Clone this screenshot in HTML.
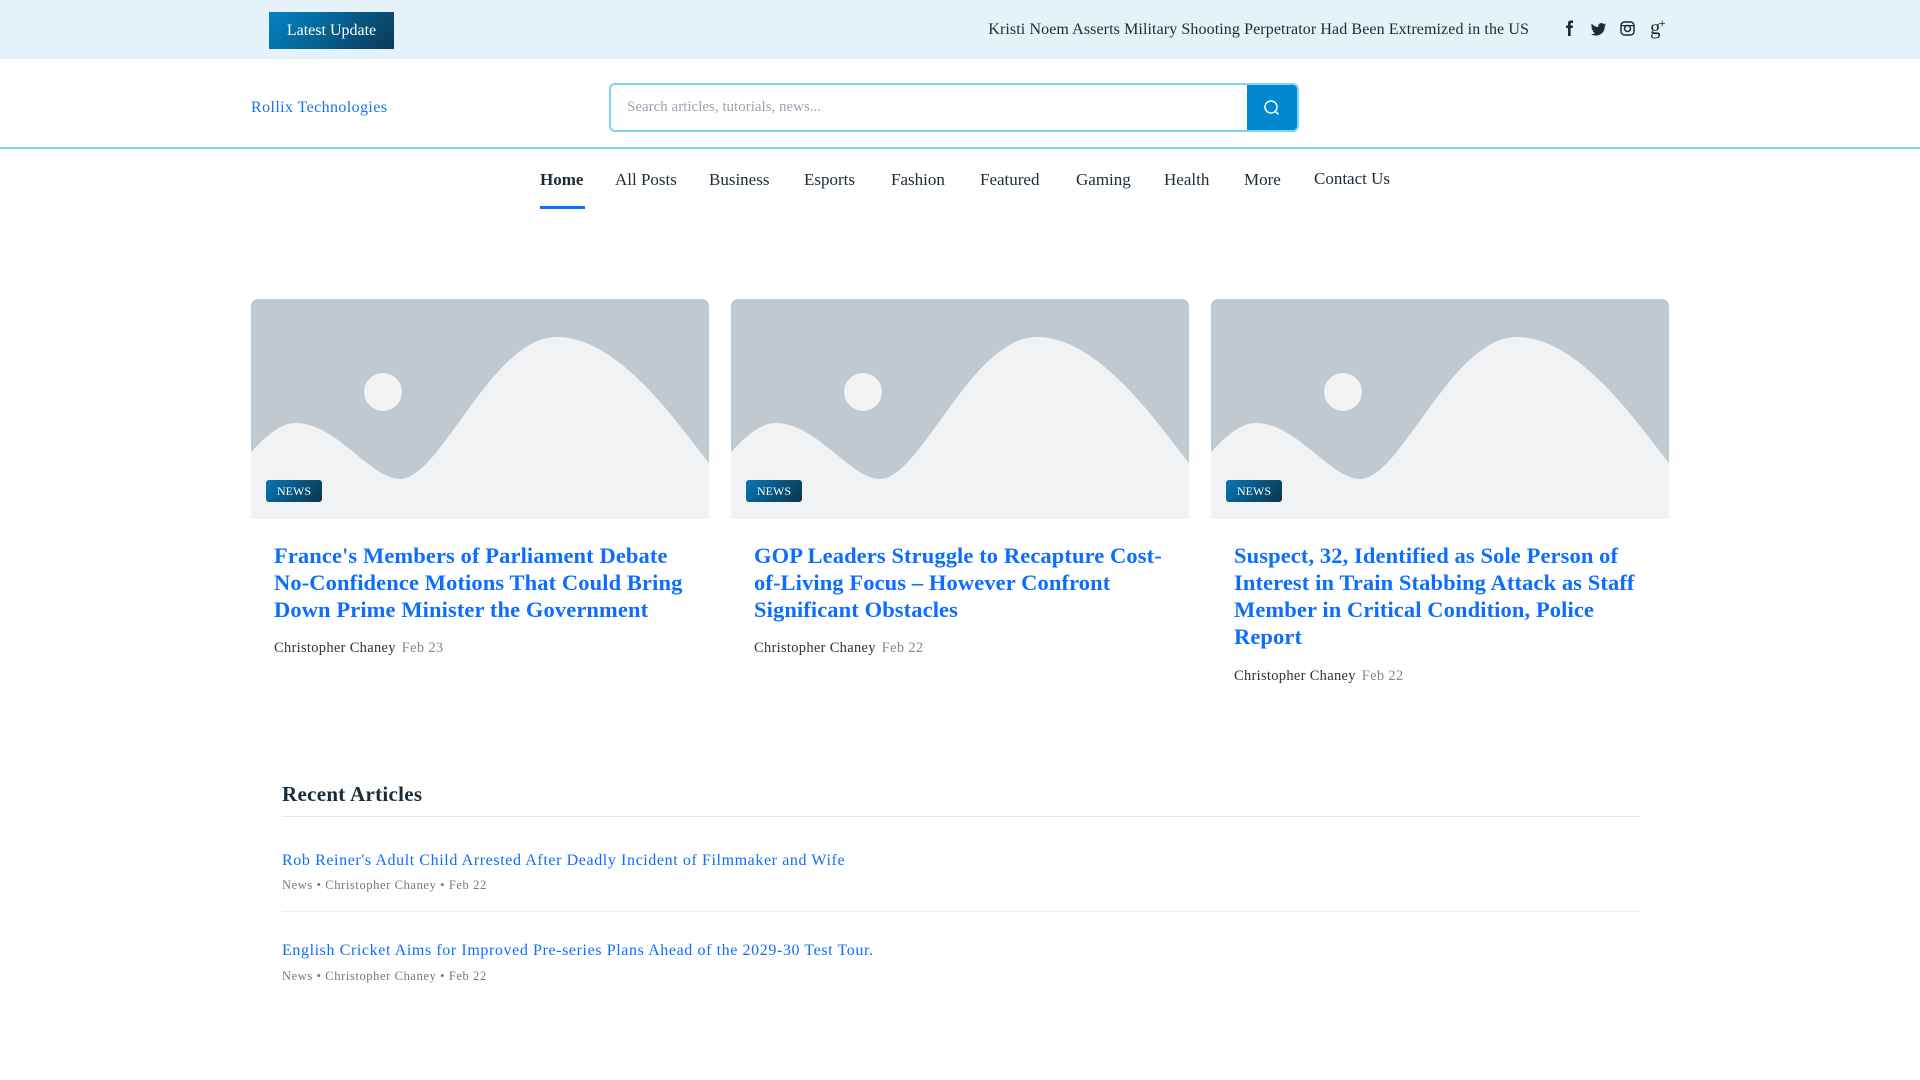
<!DOCTYPE html>
<html><head><meta charset="utf-8"><style>
*{margin:0;padding:0;box-sizing:border-box}
body{width:1920px;height:1080px;background:#fff;font-family:"Liberation Serif",serif;position:relative;overflow:hidden;color:#1c2b39}
.a{position:absolute;white-space:nowrap}
.top{position:absolute;left:0;top:0;width:1920px;height:59px;background:#e5f2f9}
.btn{left:269px;top:12px;width:125px;height:37px;background:linear-gradient(135deg,#0284c7,#0b3a55);color:#fff;font-size:16px;line-height:37px;text-align:center}
.nav{top:170px;font-size:17px;color:#1c2b39}
.card{position:absolute;top:299px;width:458px;height:220px;border-radius:7px 7px 0 0;overflow:hidden}
.badge{position:absolute;left:15px;top:181px;width:56px;height:22px;border-radius:3px;background:linear-gradient(135deg,#0677b3,#0c3650);color:#fff;font-size:12px;line-height:22px;text-align:center}
.t{position:absolute;font-weight:bold;font-size:22.5px;line-height:27px;color:#0d6efd;white-space:normal;letter-spacing:0.1px}
.au{font-size:14.5px;color:#333;letter-spacing:0.3px}
.au span{color:#888;margin-left:6px}
.rt{font-size:16px;color:#0d6efd;letter-spacing:0.6px}
.rm{font-size:12.5px;color:#777;letter-spacing:0.6px}
</style></head><body>
<div class="top"></div>
<div class="a btn">Latest Update</div>
<div class="a" style="right:391px;top:21px;font-size:16px;color:#1c2b39;letter-spacing:0.1px">Kristi Noem Asserts Military Shooting Perpetrator Had Been Extremized in the US</div>
<svg class="a" style="left:1560px;top:17px" width="110" height="22" viewBox="0 0 110 22" fill="#1c2b39">
<path d="M8 19V11H6V8.5h2V6.5C8 4.5 9 3.5 11 3.5h2V6h-1.3C10.9 6 10.7 6.4 10.7 7v1.5h2.4L12.8 11h-2.1v8z"/>
<path d="M46 7.5c-.6.3-1.2.4-1.8.5.7-.4 1.1-1 1.4-1.7-.6.4-1.3.6-2 .8A3.1 3.1 0 0 0 38.3 10c-2.6-.1-4.9-1.4-6.5-3.300-.9 1.5-.4 3.300 1 4.200-.5 0-1-.2-1.400-.4 0 1.500 1.100 2.800 2.500 3.100-.5.1-1 .2-1.400.1.4 1.300 1.600 2.100 2.900 2.200A6.300 6.300 0 0 1 31 17.200c1.400.9 3.100 1.400 4.800 1.400 5.800 0 9-4.800 9-9v-.4c.5-.5 1-1 1.300-1.700z"/>
<rect x="61" y="5" width="13" height="13" rx="3.5" fill="none" stroke="#1c2b39" stroke-width="1.5"/><circle cx="67.5" cy="11.5" r="3" fill="none" stroke="#1c2b39" stroke-width="1.5"/><rect x="61.5" y="8" width="12" height="1.2"/>
<text x="90" y="17" font-family="Liberation Serif" font-size="21">g</text><text x="99" y="10" font-family="Liberation Sans" font-size="11">+</text>
</svg>
<div class="a" style="left:251px;top:99px;font-size:16px;color:#1a73e8;letter-spacing:0.4px">Rollix Technologies</div>
<div class="a" style="left:609px;top:83px;width:690px;height:49px;border:2px solid #7fd3f7;border-radius:6px;overflow:hidden;background:#fff">
<div class="a" style="left:16px;top:14px;font-size:15px;color:#9aa5b1">Search articles, tutorials, news...</div>
<div class="a" style="right:0;top:0;width:50px;height:45px;background:#0288d1"><svg width="50" height="45"><circle cx="24" cy="22" r="6" fill="none" stroke="#fff" stroke-width="1.5"/><path d="M28.500 26.500l3 3" stroke="#fff" stroke-width="1.5"/></svg></div>
</div>
<div class="a" style="left:0;top:147px;width:1920px;height:2px;background:#7fd3f7"></div>
<div class="a nav" style="left:540px;font-weight:bold">Home</div>
<div class="a" style="left:540px;top:206px;width:45px;height:3px;background:#0d6efd"></div>
<div class="a nav" style="left:615px">All Posts</div>
<div class="a nav" style="left:709px">Business</div>
<div class="a nav" style="left:804px">Esports</div>
<div class="a nav" style="left:891px">Fashion</div>
<div class="a nav" style="left:980px">Featured</div>
<div class="a nav" style="left:1076px">Gaming</div>
<div class="a nav" style="left:1164px">Health</div>
<div class="a nav" style="left:1244px">More</div>
<div class="a nav" style="left:1314px;top:169px">Contact Us</div>

<div class="card" style="left:251px"><svg width="458" height="220"><rect width="458" height="220" fill="#c1c9d0"/><circle cx="132" cy="93" r="19" fill="#f0f2f4"/><path d="M0,153 C20,132 32,124 45,124 C85,124 120,180 149,180 C190,180 240,38 306,38 C370,38 430,130 458,164 V220 H0 Z" fill="#f0f2f4"/></svg><div class="badge">NEWS</div></div>
<div class="card" style="left:731px"><svg width="458" height="220"><rect width="458" height="220" fill="#c1c9d0"/><circle cx="132" cy="93" r="19" fill="#f0f2f4"/><path d="M0,153 C20,132 32,124 45,124 C85,124 120,180 149,180 C190,180 240,38 306,38 C370,38 430,130 458,164 V220 H0 Z" fill="#f0f2f4"/></svg><div class="badge">NEWS</div></div>
<div class="card" style="left:1211px"><svg width="458" height="220"><rect width="458" height="220" fill="#c1c9d0"/><circle cx="132" cy="93" r="19" fill="#f0f2f4"/><path d="M0,153 C20,132 32,124 45,124 C85,124 120,180 149,180 C190,180 240,38 306,38 C370,38 430,130 458,164 V220 H0 Z" fill="#f0f2f4"/></svg><div class="badge">NEWS</div></div>

<div class="t" style="left:274px;top:542px;width:420px">France's Members of Parliament Debate No-Confidence Motions That Could Bring Down Prime Minister the Government</div>
<div class="a au" style="left:274px;top:640px">Christopher Chaney<span>Feb 23</span></div>
<div class="t" style="left:754px;top:542px;width:420px">GOP Leaders Struggle to Recapture Cost-of-Living Focus – However Confront Significant Obstacles</div>
<div class="a au" style="left:754px;top:640px">Christopher Chaney<span>Feb 22</span></div>
<div class="t" style="left:1234px;top:542px;width:420px">Suspect, 32, Identified as Sole Person of Interest in Train Stabbing Attack as Staff Member in Critical Condition, Police Report</div>
<div class="a au" style="left:1234px;top:668px">Christopher Chaney<span>Feb 22</span></div>

<div class="a" style="left:282px;top:782px;font-size:21px;font-weight:bold;color:#1c2b39;letter-spacing:0.3px">Recent Articles</div>
<div class="a" style="left:282px;top:816px;width:1358px;height:1px;background:#e3e6e9"></div>
<div class="a rt" style="left:282px;top:852px">Rob Reiner's Adult Child Arrested After Deadly Incident of Filmmaker and Wife</div>
<div class="a rm" style="left:282px;top:878px">News • Christopher Chaney • Feb 22</div>
<div class="a" style="left:282px;top:911px;width:1358px;height:1px;background:#eceef0"></div>
<div class="a rt" style="left:282px;top:942px">English Cricket Aims for Improved Pre-series Plans Ahead of the 2029-30 Test Tour.</div>
<div class="a rm" style="left:282px;top:969px">News • Christopher Chaney • Feb 22</div>
</body></html>
